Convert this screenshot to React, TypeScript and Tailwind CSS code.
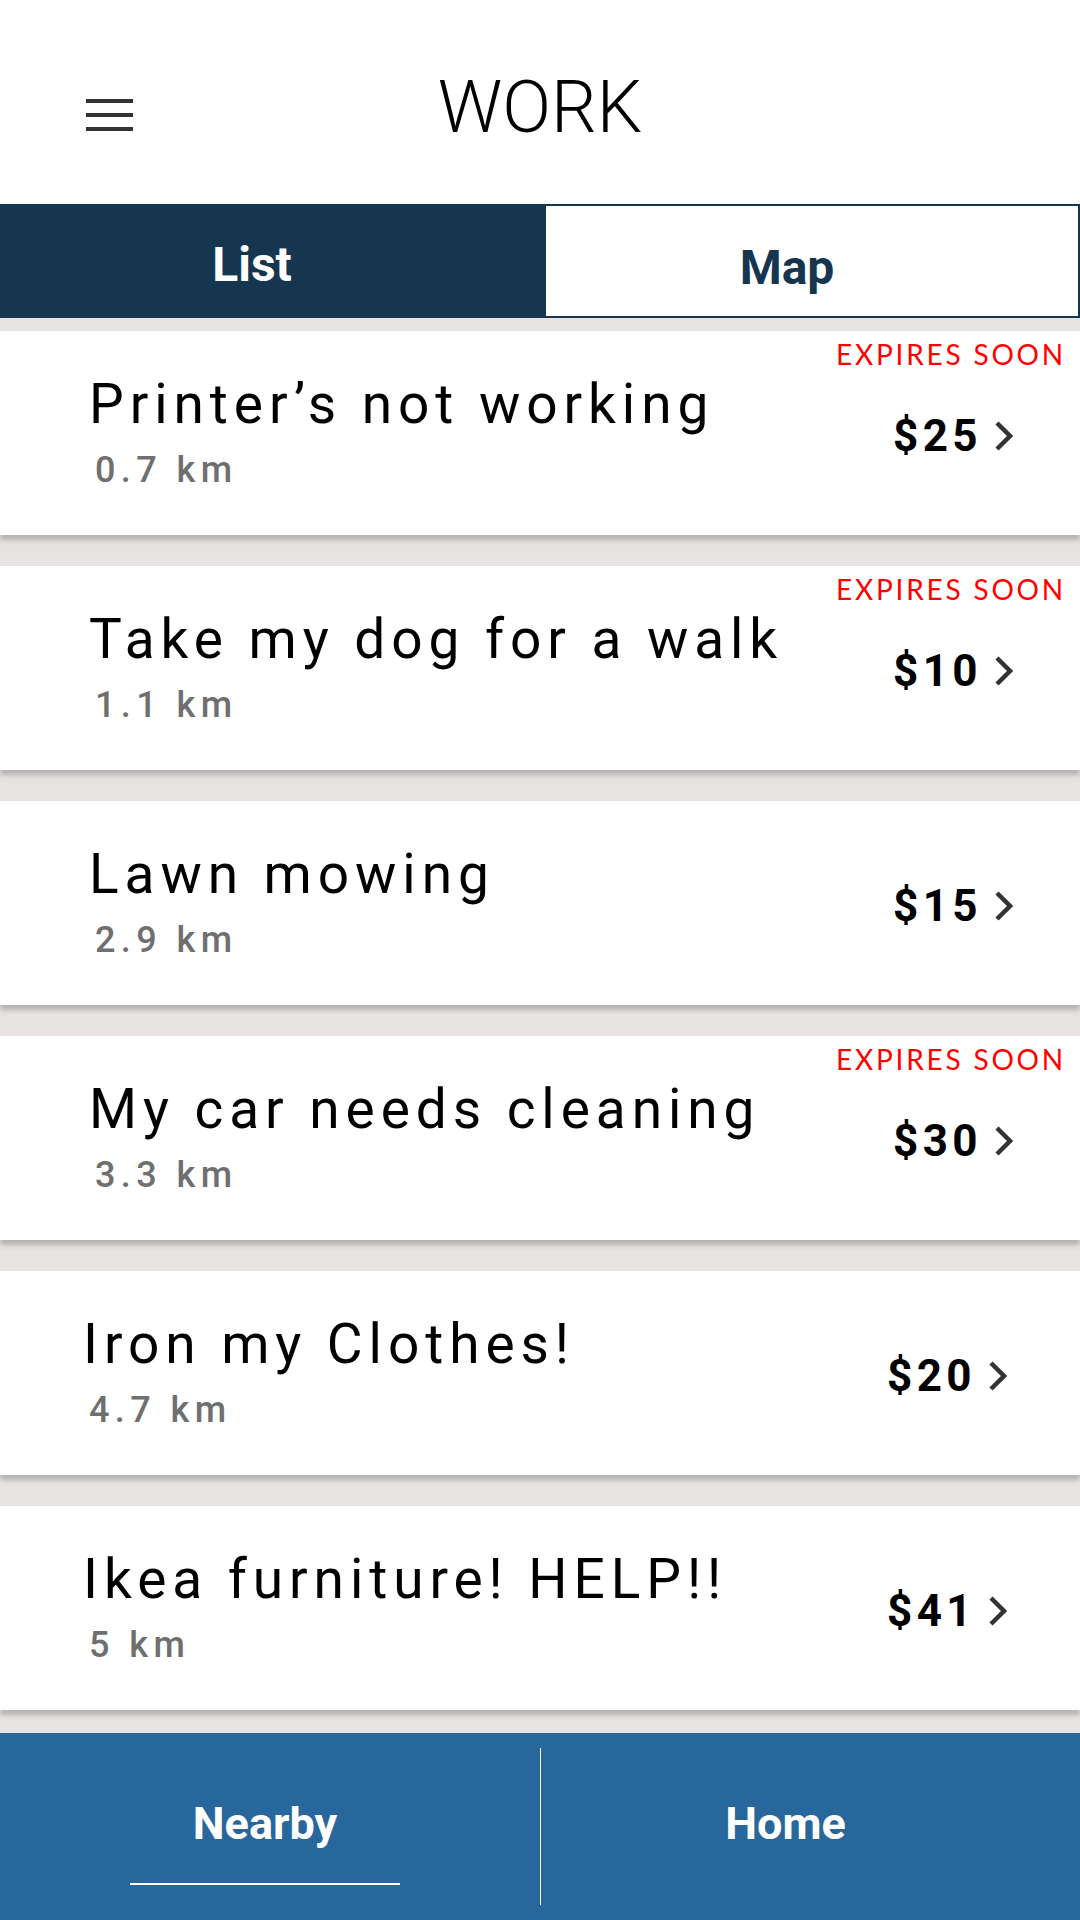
import React from 'react';

const jobs = [
  { title: 'Printer’s not working', distance: '0.7 km', price: '$25', expires: true, shifted: false },
  { title: 'Take my dog for a walk', distance: '1.1 km', price: '$10', expires: true, shifted: false },
  { title: 'Lawn mowing', distance: '2.9 km', price: '$15', expires: false, shifted: false },
  { title: 'My car needs cleaning', distance: '3.3 km', price: '$30', expires: true, shifted: false },
  { title: 'Iron my Clothes!', distance: '4.7 km', price: '$20', expires: false, shifted: true },
  { title: 'Ikea furniture! HELP!!', distance: '5 km', price: '$41', expires: false, shifted: true },
];

function Chevron() {
  return (
    <svg width="19" height="30" viewBox="0 0 19 30" fill="none">
      <polyline points="3,2 16,15 3,28" stroke="#333333" strokeWidth="4.5" />
    </svg>
  );
}

export default function App() {
  return (
    <div className="h-[1920px] w-[1080px] flex flex-col bg-white font-['Roboto',sans-serif] overflow-hidden">
      {/* header */}
      <header className="grid grid-cols-[1fr_auto_1fr] h-[204px] shrink-0">
        <div className="pl-[86px] pt-[99px]">
          <div className="flex flex-col gap-[10px] w-[47px]">
            <span className="block h-[4px] bg-[#333333]"></span>
            <span className="block h-[4px] bg-[#333333]"></span>
            <span className="block h-[4px] bg-[#333333]"></span>
          </div>
        </div>
        <h1 className="pt-[72px] text-[72px] leading-none font-light text-black">WORK</h1>
        <div></div>
      </header>

      {/* tabs */}
      <div className="flex h-[114px] shrink-0">
        <div className="w-[546px] bg-[#163650] flex justify-center pr-[42px] pt-[37px]">
          <span className="text-[48px] leading-none font-bold text-white">List</span>
        </div>
        <div className="flex-1 bg-white border-2 border-l-0 border-[#163650] flex justify-center pr-[50px] pt-[38px]">
          <span className="text-[48px] leading-none font-bold text-[#163650]">Map</span>
        </div>
      </div>

      {/* list */}
      <div className="flex-1 bg-[#e7e3e3] pt-[13px] flex flex-col gap-[31px]">
        {jobs.map((job, index) => (
          <div
            key={index}
            className="relative h-[204px] bg-white shadow-[0_5px_5px_rgba(0,0,0,0.22)] flex items-start"
          >
            {job.expires && (
              <span className="absolute top-[9px] right-[14px] font-['Lato',sans-serif] text-[28px] leading-none tracking-[0.1em] text-[#ff0000]">
                EXPIRES SOON
              </span>
            )}
            <div className={job.shifted ? 'flex-1 pl-[83px] pt-[46px]' : 'flex-1 pl-[89px] pt-[46px]'}>
              <div className="text-[55px] leading-none tracking-[0.108em] text-black">{job.title}</div>
              <div className="mt-[20px] ml-[6px] text-[36px] leading-none font-medium tracking-[0.15em] text-[#6f6f6f]">
                {job.distance}
              </div>
            </div>
            <div className={job.shifted ? 'self-center flex items-center gap-[12px] pr-[73px] pt-[6px]' : 'self-center flex items-center gap-[12px] pr-[67px] pt-[6px]'}>
              <span className="text-[44px] leading-none font-bold tracking-[0.1em] text-black">{job.price}</span>
              <Chevron />
            </div>
          </div>
        ))}
      </div>

      {/* bottom nav */}
      <nav className="h-[187px] shrink-0 bg-[#28679b] flex">
        <div className="w-[540px] shrink-0 flex flex-col items-center pt-[68px] pr-[10px]">
          <span className="text-[45px] leading-none font-bold text-white">Nearby</span>
          <span className="mt-[37px] block h-[2px] w-[270px] bg-white"></span>
        </div>
        <div className="w-px my-[15px] bg-white"></div>
        <div className="flex-1 flex justify-center pt-[68px] pr-[50px]">
          <span className="text-[45px] leading-none font-bold text-white">Home</span>
        </div>
      </nav>
    </div>
  );
}
